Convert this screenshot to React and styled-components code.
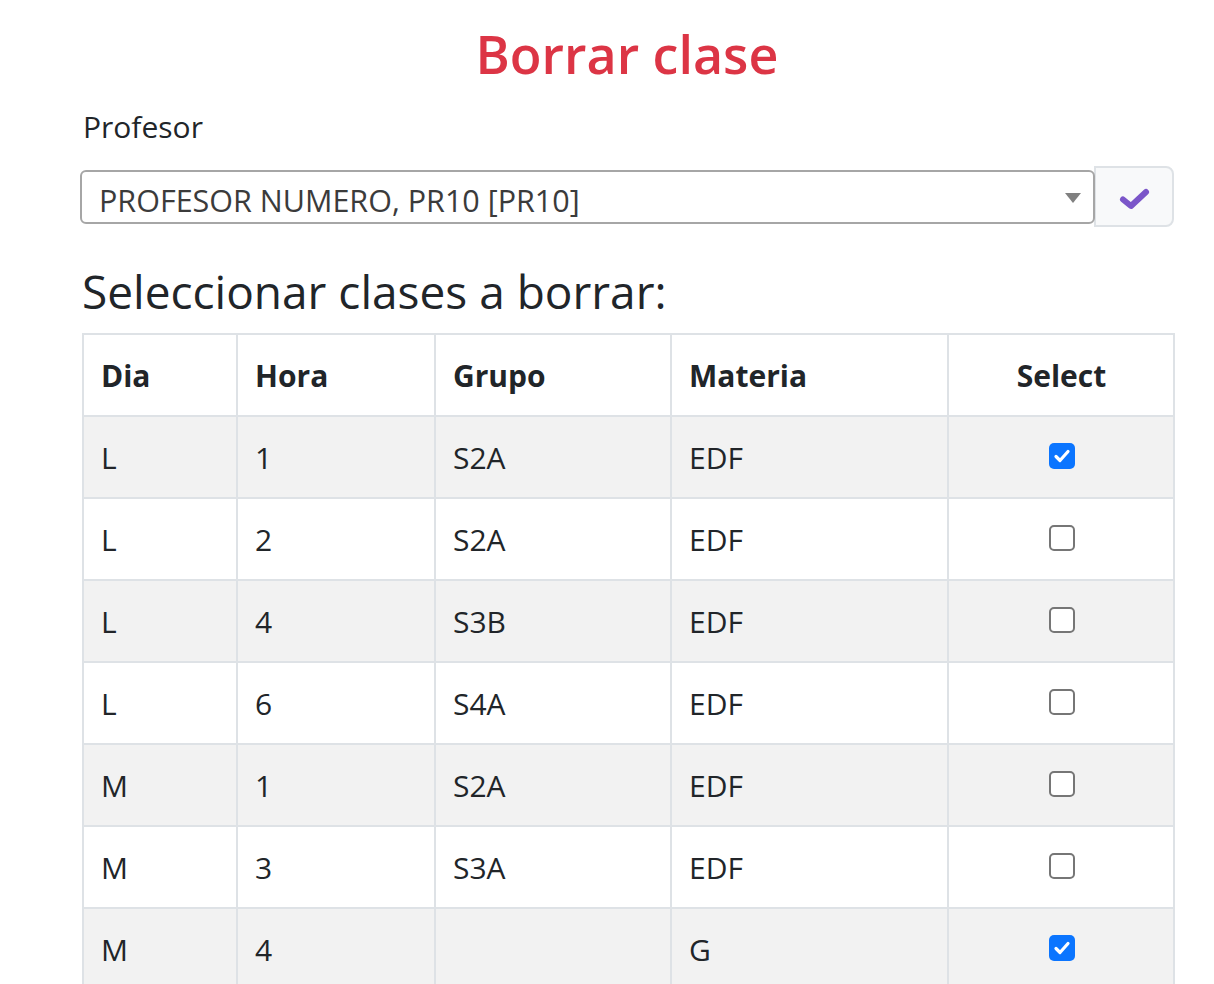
import React, { useState } from "react";
import styled, { createGlobalStyle } from "styled-components";

const GlobalStyle = createGlobalStyle`
  body {
    margin: 0;
    background: #fff;
    color: #212529;
    font-family: "Open Sans", "Noto Sans", sans-serif;
  }
`;

const Page = styled.div`
  width: 1094px;
  margin-left: 80px;
  padding-top: 22px;
`;

const Title = styled.h1`
  margin: 0;
  text-align: center;
  color: #dc3545;
  font-size: 52px;
  font-weight: 600;
  line-height: 64px;
`;

const Label = styled.label`
  display: block;
  margin: 19px 0 0 3px;
  font-size: 30px;
  line-height: 44px;
`;

const InputGroup = styled.div`
  display: flex;
  align-items: center;
  margin-top: 17px;
`;

const SelectBox = styled.div`
  position: relative;
  flex: 1;
  height: 54px;
  box-sizing: border-box;
  border: 2px solid #a6a6a6;
  border-radius: 6px;
  display: flex;
  align-items: center;
  padding: 7px 0 0 17px;
  font-size: 30.5px;
  color: #3b3b3b;
`;

const Arrow = styled.span`
  position: absolute;
  right: 12px;
  top: 21px;
  width: 0;
  height: 0;
  border-left: 8px solid transparent;
  border-right: 8px solid transparent;
  border-top: 10px solid #808080;
`;

const CheckButton = styled.button`
  width: 80px;
  height: 61px;
  box-sizing: border-box;
  background: #f8f9fa;
  border: 2px solid #dee2e6;
  border-radius: 0 8px 8px 0;
  display: flex;
  align-items: center;
  justify-content: center;
  padding: 6px 0 0;
  margin-left: -1px;
`;

const Heading = styled.h2`
  margin: 33px 0 0 2px;
  font-size: 46px;
  font-weight: 500;
  line-height: 62px;
`;

const Table = styled.table`
  margin: 11px 0 0 2px;
  width: 1091px;
  border-collapse: collapse;
  table-layout: fixed;
  font-size: 30px;
`;

const Cell = styled.td`
  border: 2px solid #dee2e6;
  padding: 17px 16px 15px 17px;
  line-height: 48px;
  text-align: ${(p) => (p.$center ? "center" : "left")};
  font-weight: ${(p) => (p.$head ? 700 : 400)};
  color: #212529;
`;

const Row = styled.tr`
  background: ${(p) => (p.$striped ? "#f2f2f2" : "#fff")};
`;

const Box = styled.span`
  display: inline-block;
  vertical-align: baseline;
  width: 26px;
  height: 26px;
  box-sizing: border-box;
  border-radius: 5px;
  border: ${(p) => (p.$checked ? "none" : "2px solid #767676")};
  background: ${(p) => (p.$checked ? "#0b75ff" : "#fff")};
  cursor: pointer;

  svg {
    display: block;
    margin: 4px auto 0;
  }
`;

const rows = [
  ["L", "1", "S2A", "EDF", true],
  ["L", "2", "S2A", "EDF", false],
  ["L", "4", "S3B", "EDF", false],
  ["L", "6", "S4A", "EDF", false],
  ["M", "1", "S2A", "EDF", false],
  ["M", "3", "S3A", "EDF", false],
  ["M", "4", "", "G", true],
];

const Checkbox = ({ checked, onClick }) => (
  <Box $checked={checked} onClick={onClick}>
    {checked && (
      <svg width="18" height="18" viewBox="0 0 18 18">
        <path
          d="M3 9.5 L7 13.5 L15 4.5"
          fill="none"
          stroke="#fff"
          strokeWidth="3.2"
          strokeLinecap="round"
          strokeLinejoin="round"
        />
      </svg>
    )}
  </Box>
);

const App = () => {
  const [sel, setSel] = useState(rows.map((r) => r[4]));

  const toggle = (i) => setSel(sel.map((v, j) => (j === i ? !v : v)));

  return (
    <Page>
      <GlobalStyle />
      <Title>Borrar clase</Title>
      <Label>Profesor</Label>
      <InputGroup>
        <SelectBox>
          PROFESOR NUMERO, PR10 [PR10]
          <Arrow />
        </SelectBox>
        <CheckButton>
          <svg width="34" height="26" viewBox="0 0 34 26">
            <path
              d="M6 12.5 L14 19 L29 5"
              fill="none"
              stroke="#7b56c9"
              strokeWidth="6"
              strokeLinecap="round"
              strokeLinejoin="round"
            />
          </svg>
        </CheckButton>
      </InputGroup>
      <Heading>Seleccionar clases a borrar:</Heading>
      <Table>
        <colgroup>
          <col style={{ width: 154 }} />
          <col style={{ width: 198 }} />
          <col style={{ width: 236 }} />
          <col style={{ width: 277 }} />
          <col style={{ width: 226 }} />
        </colgroup>
        <thead>
          <Row>
            <Cell as="th" $head>Dia</Cell>
            <Cell as="th" $head>Hora</Cell>
            <Cell as="th" $head>Grupo</Cell>
            <Cell as="th" $head>Materia</Cell>
            <Cell as="th" $head $center>Select</Cell>
          </Row>
        </thead>
        <tbody>
          {rows.map((r, i) => (
            <Row key={i} $striped={i % 2 === 0}>
              <Cell>{r[0]}</Cell>
              <Cell>{r[1]}</Cell>
              <Cell>{r[2]}</Cell>
              <Cell>{r[3]}</Cell>
              <Cell $center>
                <Checkbox checked={sel[i]} onClick={() => toggle(i)} />
              </Cell>
            </Row>
          ))}
        </tbody>
      </Table>
    </Page>
  );
};

export default App;
